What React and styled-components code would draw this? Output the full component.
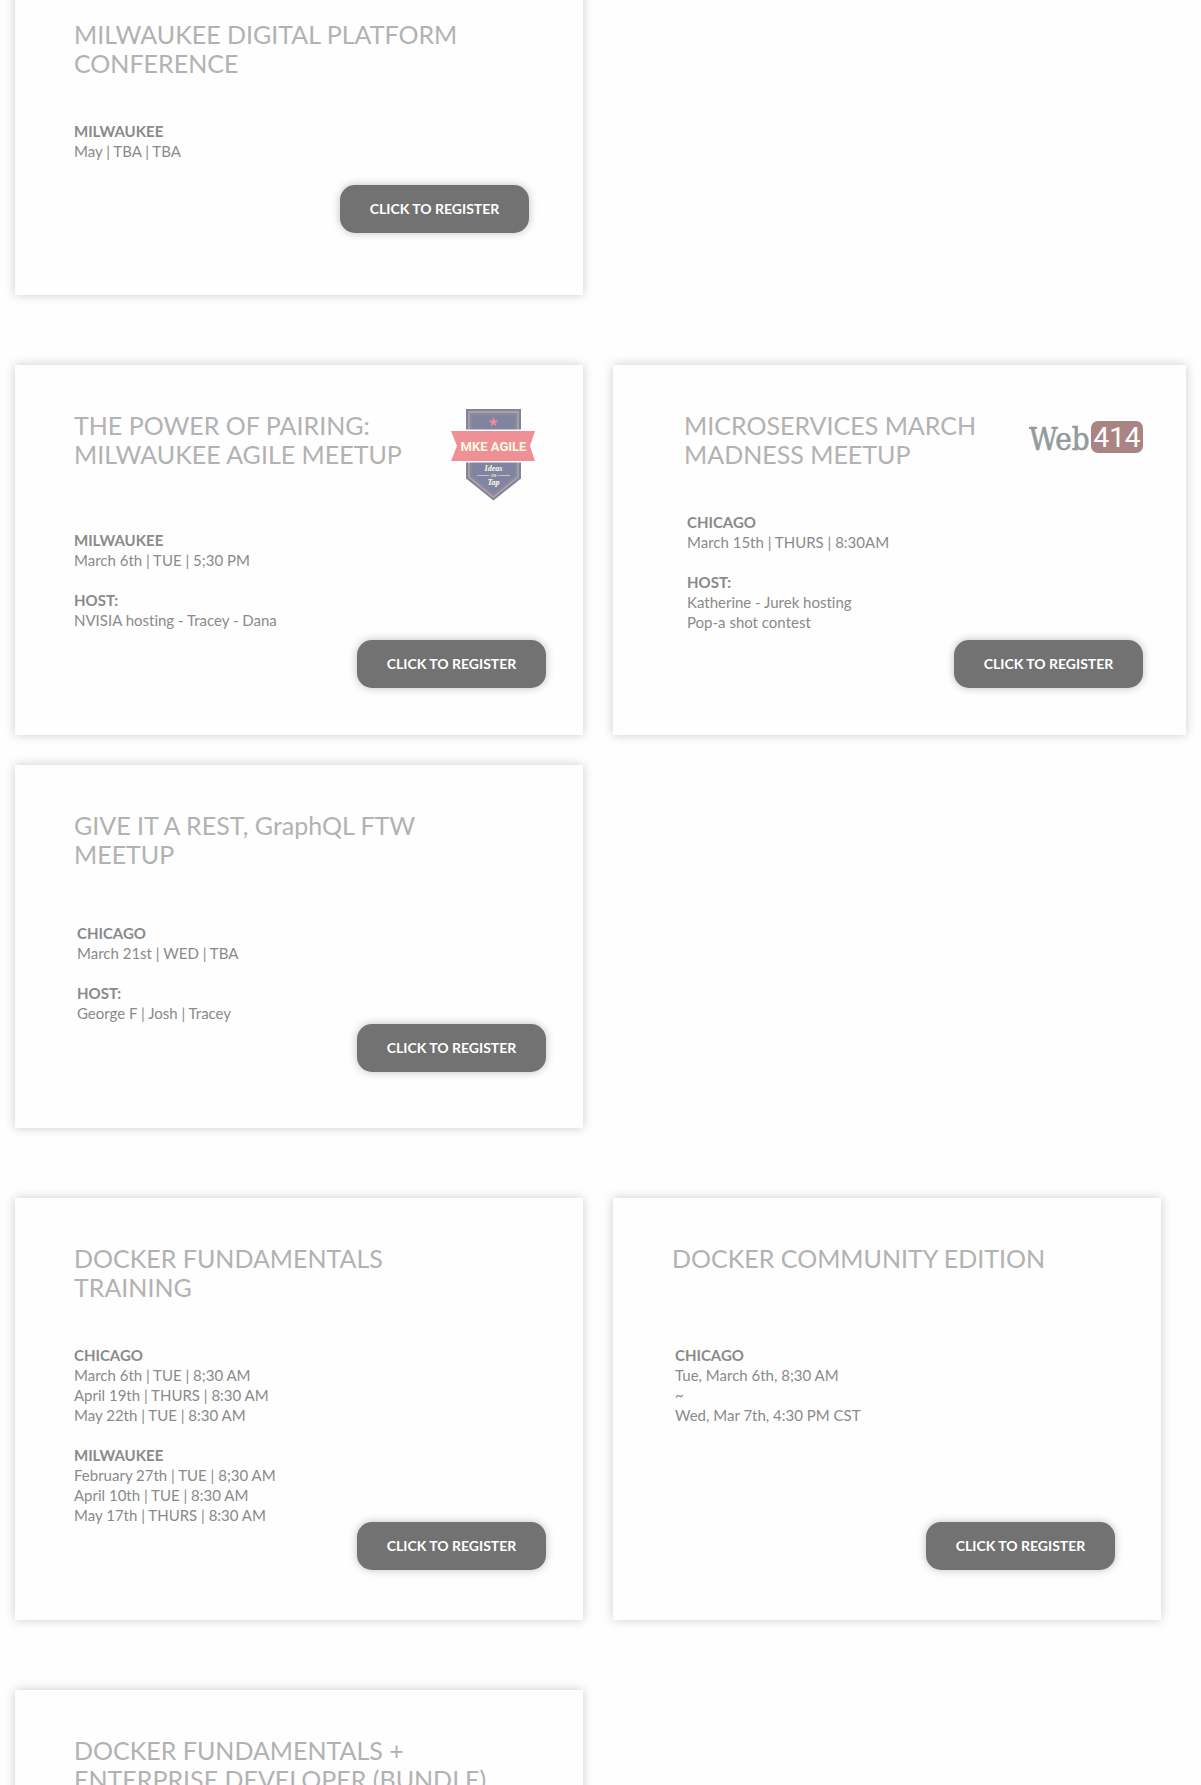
import React from "react";
import styled, { createGlobalStyle } from "styled-components";

const GlobalStyle = createGlobalStyle`
  * {
    box-sizing: border-box;
  }

  body {
    margin: 0;
    background: #fefefe;
    font-family: Lato, "Open Sans", sans-serif;
    font-variant-ligatures: none;
  }
`;

const Page = styled.main`
  display: flex;
  flex-direction: column;
  gap: 70px;
  margin-top: -26px;
  padding: 0 15px;
`;

const Section = styled.section`
  display: grid;
  grid-template-columns: 568fr 573fr;
  gap: 30px;
`;

const Card = styled.article`
  display: flex;
  flex-direction: column;
  min-height: ${(p) => p.$minHeight}px;
  margin-right: ${(p) => p.$inset || 0}px;
  padding: 44px ${(p) => p.$right}px ${(p) => p.$bottom}px ${(p) => p.$left || 59}px;
  background: #fefefe;
  box-shadow: 0 0 10px rgba(0, 0, 0, 0.2);
`;

const Header = styled.header`
  display: flex;
  justify-content: space-between;
  align-items: flex-start;
  min-height: 60px;
  margin-bottom: ${(p) => p.$gap}px;
`;

const Title = styled.h2`
  margin: 0;
  padding-top: 2px;
  color: #b2b2b2;
  font-size: 25px;
  font-weight: 400;
  line-height: 29px;
  white-space: nowrap;
`;

const LogoBox = styled.div`
  display: flex;
  margin-top: ${(p) => p.$top}px;
  margin-right: ${(p) => p.$right}px;
`;

const Body = styled.div`
  display: flex;
  flex: 1;
  justify-content: space-between;
`;

const Details = styled.div`
  display: flex;
  flex-direction: column;
  gap: 20px;
  padding-left: ${(p) => p.$indent || 0}px;
  color: #8a8a8a;
  font-size: 15px;
  line-height: 20px;
  white-space: nowrap;
`;

const GroupTitle = styled.h3`
  margin: 0;
  font-size: 15px;
  font-weight: 700;
  line-height: 20px;
`;

const Line = styled.p`
  margin: 0;
`;

const RegisterButton = styled.button`
  flex: none;
  align-self: flex-end;
  width: 189px;
  height: 48px;
  padding: 0;
  border: 0;
  border-radius: 15px;
  background: #727272;
  box-shadow: 0 0 8px rgba(0, 0, 0, 0.25);
  color: #ffffff;
  font-family: inherit;
  font-size: 14px;
  font-weight: 700;
  line-height: 20px;
  cursor: pointer;
`;

function MkeAgileLogo() {
  return (
    <svg width="84" height="92" viewBox="0 0 84 92" role="img" aria-label="MKE Agile">
      <path d="M15 0H70V69.500L42.500 91.500L15 69.500Z" fill="#8084a0" />
      <path
        d="M18 3H67V68L42.500 88L18 68Z"
        fill="none"
        stroke="#b8aa98"
        strokeWidth="1.400"
      />
      <path d="M20 5H65V67L42.500 85L20 67Z" fill="none" stroke="#989aa2" strokeWidth="0.700" />
      <path
        d="M42.500 8L43.700 11.600H47.500L44.500 13.900L45.600 17.500L42.500 15.300L39.400 17.500L40.500 13.900L37.500 11.600H41.300Z"
        fill="#ef8b94"
      />
      <path d="M13 20.500H72V53.500H13Z" fill="#fefefe" />
      <path d="M0 22H84L79 37L84 52H0L6 37Z" fill="#ef8f96" />
      <g fill="#fffbe0" textAnchor="middle">
        <text
          x="42.500"
          y="42"
          fontFamily="Roboto, sans-serif"
          fontSize="13"
          fontWeight="700"
        >
          MKE AGILE
        </text>
        <text
          x="42.500"
          y="62"
          fontFamily="'Liberation Serif', serif"
          fontSize="8"
          fontStyle="italic"
          fontWeight="700"
        >
          Ideas
        </text>
        <text x="42.500" y="68" fontFamily="Roboto, sans-serif" fontSize="4">
          ON
        </text>
        <text
          x="42.500"
          y="76"
          fontFamily="'Liberation Serif', serif"
          fontSize="8"
          fontStyle="italic"
          fontWeight="700"
        >
          Tap
        </text>
      </g>
      <path d="M26 66.500H38M47 66.500H59" stroke="#d0d0cc" strokeWidth="0.800" />
    </svg>
  );
}

function Web414Logo() {
  return (
    <svg width="114" height="32" viewBox="0 0 114 32" role="img" aria-label="Web414">
      <rect x="62" y="0" width="52" height="32" rx="7" fill="#a98482" />
      <text
        x="0"
        y="29"
        fill="#929a9b"
        stroke="#929a9b"
        strokeWidth="0.600"
        fontFamily="'DejaVu Serif Condensed', 'DejaVu Serif', serif"
        fontSize="31"
      >
        Web
      </text>
      <text
        x="88"
        y="26"
        fill="#ffffff"
        fontFamily="Roboto, sans-serif"
        fontSize="28"
        textAnchor="middle"
      >
        414
      </text>
    </svg>
  );
}

function EventCard({ title, groups, logo, headerGap = 43, indent, ...box }) {
  return (
    <Card {...box}>
      <Header $gap={headerGap}>
        <Title>
          {title.map((line, i) => (
            <React.Fragment key={line}>
              {i > 0 && <br />}
              {line}
            </React.Fragment>
          ))}
        </Title>
        {logo}
      </Header>
      <Body>
        <Details $indent={indent}>
          {groups.map((group) => (
            <div key={group.name}>
              <GroupTitle>{group.name}</GroupTitle>
              {group.lines.map((line) => (
                <Line key={line}>{line}</Line>
              ))}
            </div>
          ))}
        </Details>
        <RegisterButton type="button">CLICK TO REGISTER</RegisterButton>
      </Body>
    </Card>
  );
}

export default function App() {
  return (
    <>
      <GlobalStyle />
      <Page>
        <Section>
          <EventCard
            title={["MILWAUKEE DIGITAL PLATFORM", "CONFERENCE"]}
            groups={[{ name: "MILWAUKEE", lines: ["May | TBA | TBA"] }]}
            $minHeight={321}
            $right={54}
            $bottom={62}
          />
        </Section>

        <Section>
          <EventCard
            title={["THE POWER OF PAIRING:", "MILWAUKEE AGILE MEETUP"]}
            groups={[
              { name: "MILWAUKEE", lines: ["March 6th | TUE | 5;30 PM"] },
              { name: "HOST:", lines: ["NVISIA hosting - Tracey - Dana"] },
            ]}
            logo={
              <LogoBox $top={0} $right={11}>
                <MkeAgileLogo />
              </LogoBox>
            }
            headerGap={29}
            $minHeight={370}
            $right={37}
            $bottom={47}
          />
          <EventCard
            title={["MICROSERVICES MARCH", "MADNESS MEETUP"]}
            groups={[
              { name: "CHICAGO", lines: ["March 15th | THURS | 8:30AM"] },
              { name: "HOST:", lines: ["Katherine - Jurek hosting", "Pop-a shot contest"] },
            ]}
            logo={
              <LogoBox $top={12} $right={0}>
                <Web414Logo />
              </LogoBox>
            }
            indent={3}
            $minHeight={370}
            $left={71}
            $right={43}
            $bottom={47}
          />
          <EventCard
            title={["GIVE IT A REST, GraphQL FTW", "MEETUP"]}
            groups={[
              { name: "CHICAGO", lines: ["March 21st | WED | TBA"] },
              { name: "HOST:", lines: ["George F | Josh | Tracey"] },
            ]}
            headerGap={54}
            indent={3}
            $minHeight={363}
            $right={37}
            $bottom={56}
          />
        </Section>

        <Section>
          <EventCard
            title={["DOCKER FUNDAMENTALS", "TRAINING"]}
            groups={[
              {
                name: "CHICAGO",
                lines: [
                  "March 6th | TUE | 8;30 AM",
                  "April 19th | THURS | 8:30 AM",
                  "May 22th | TUE | 8:30 AM",
                ],
              },
              {
                name: "MILWAUKEE",
                lines: [
                  "February 27th | TUE | 8;30 AM",
                  "April 10th | TUE | 8:30 AM",
                  "May 17th | THURS | 8:30 AM",
                ],
              },
            ]}
            $minHeight={422}
            $right={37}
            $bottom={50}
          />
          <EventCard
            title={["DOCKER COMMUNITY EDITION"]}
            groups={[
              {
                name: "CHICAGO",
                lines: ["Tue, March 6th, 8;30 AM", "~", "Wed, Mar 7th, 4:30 PM CST"],
              },
            ]}
            indent={3}
            $inset={25}
            $minHeight={422}
            $right={46}
            $bottom={50}
          />
        </Section>

        <Section>
          <Card $right={37} $bottom={0} $minHeight={104}>
            <Header $gap={0}>
              <Title>
                DOCKER FUNDAMENTALS +<br />
                ENTERPRISE DEVELOPER (BUNDLE)
              </Title>
            </Header>
          </Card>
        </Section>
      </Page>
    </>
  );
}
